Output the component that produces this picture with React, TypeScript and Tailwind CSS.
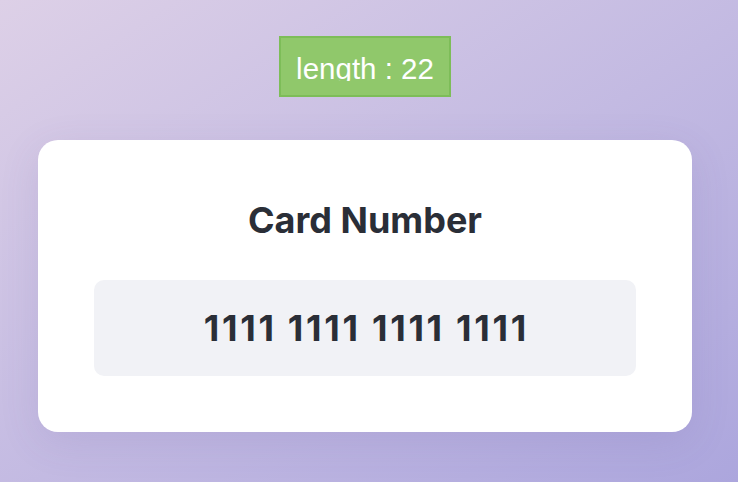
export default function App() {
  return (
    <div className="flex min-h-screen w-full flex-col items-center bg-gradient-to-br from-[#ddd0e7] to-[#aca6dd] pr-2 pt-9 font-['Inter',sans-serif]">
      <div className="border-2 border-[#7dbd58] bg-[#90c86b] px-[15px] pt-[15px] pb-[14px] font-['Liberation_Sans',Arial,sans-serif] text-[29.5px] text-white">
        <div className="h-[28px] overflow-hidden leading-[32px]">length : 22</div>
      </div>

      <div className="mt-[43px] w-[654px] rounded-[20px] bg-white px-14 pt-[60px] pb-14 shadow-[0_10px_40px_rgba(90,70,150,0.12)]">
        <h1 className="text-center text-4xl font-bold leading-10 text-[#2a2e37]">
          Card Number
        </h1>
        <div className="mt-10 flex h-24 items-center justify-center rounded-[10px] bg-[#f1f2f6]">
          <span className="pl-[2.7px] text-4xl font-bold tracking-[2.7px] text-[#2a2e37]">1111 1111 1111 1111</span>
        </div>
      </div>
    </div>
  )
}
